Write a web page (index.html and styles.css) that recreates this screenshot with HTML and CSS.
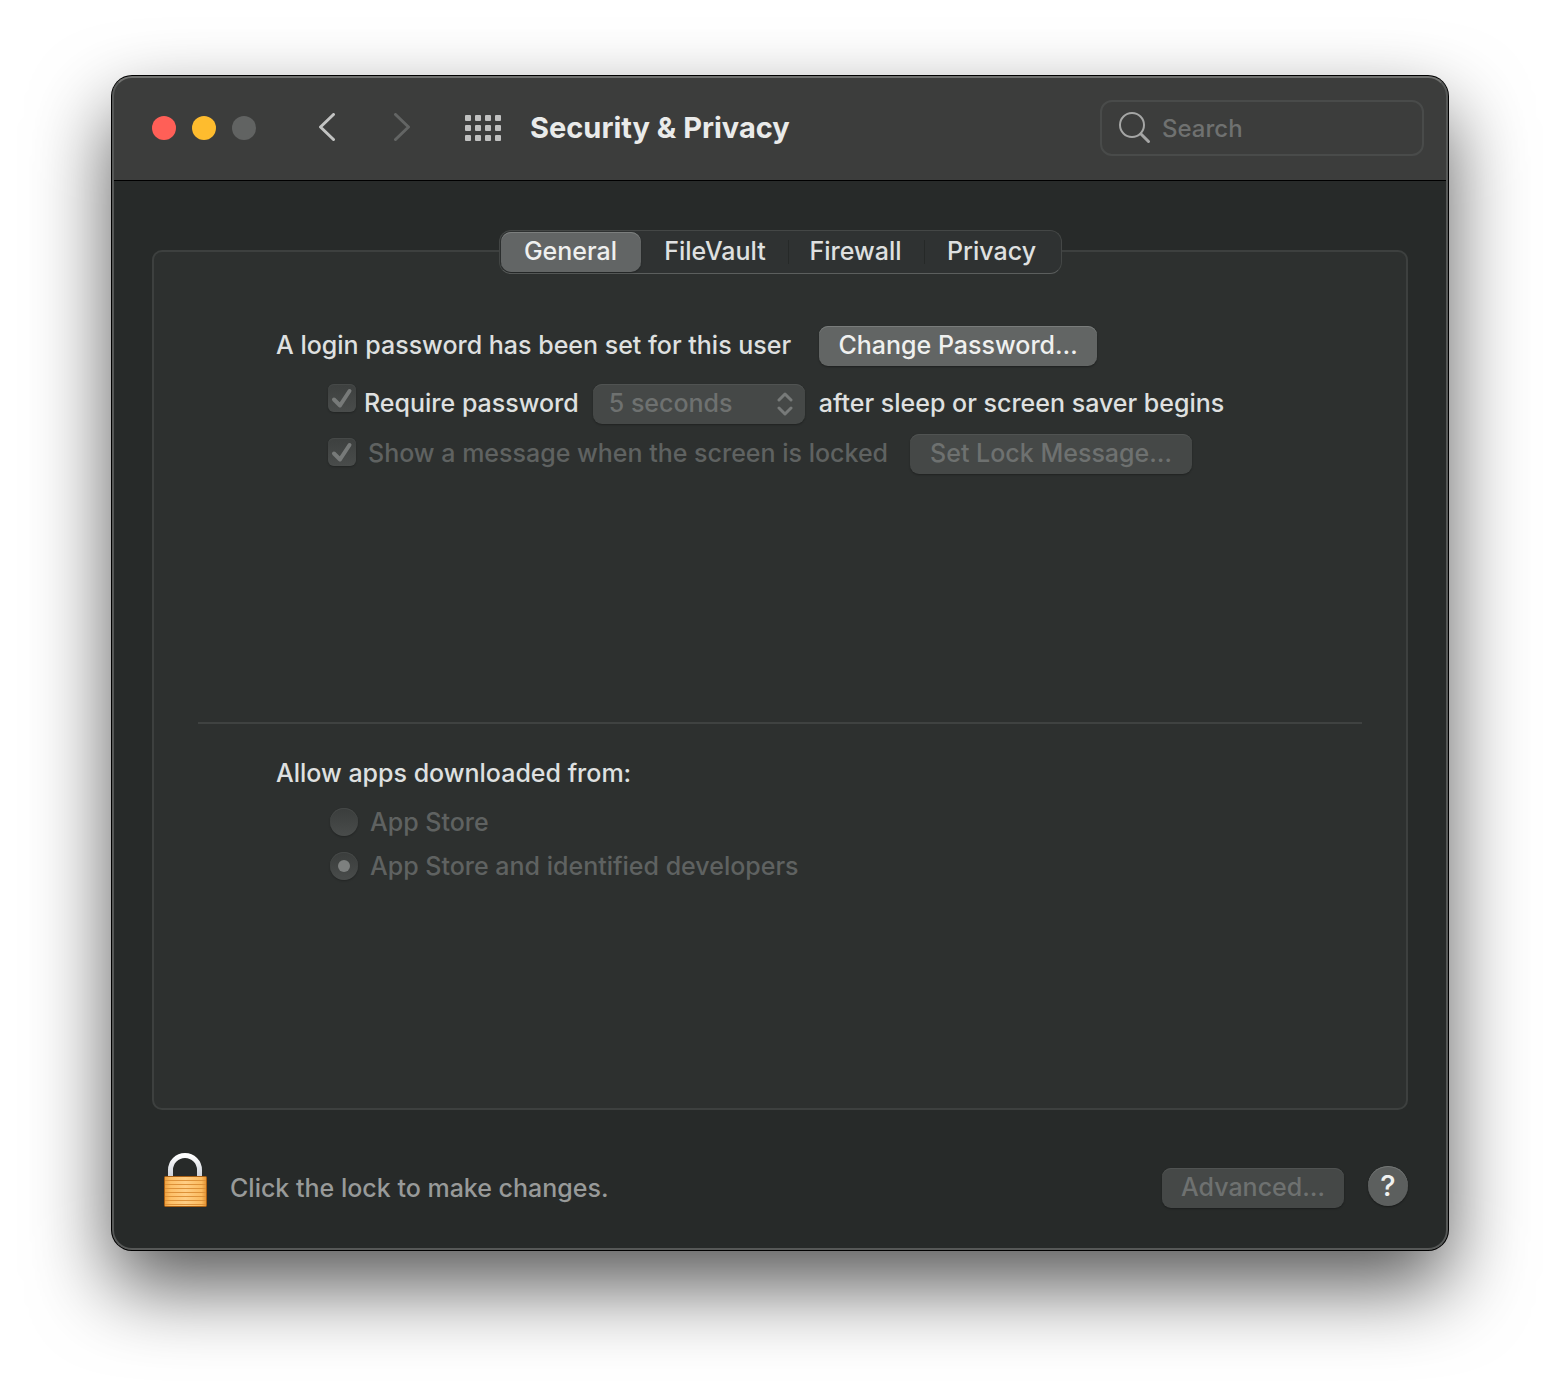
FILE: index.html
```html
<!DOCTYPE html>
<html lang="en">
<head>
    <meta charset="UTF-8">
    <meta name="viewport" content="width=device-width, initial-scale=1.0">
    <title>Security &amp; Privacy</title>
    <link rel="stylesheet" href="styles.css">
</head>
<body>

    <div class="window">
        <header class="titlebar">
            <div class="lights">
                <button type="button" class="light close" aria-label="Close"></button>
                <button type="button" class="light minimize" aria-label="Minimize"></button>
                <button type="button" class="light zoom" aria-label="Zoom" disabled></button>
            </div>
            <div class="nav">
                <button type="button" class="icon-btn" aria-label="Back">
                    <svg width="18" height="30" viewBox="0 0 18 30"><path d="M15.500 1.500 2.500 14l13 12.500"/></svg>
                </button>
                <button type="button" class="icon-btn" aria-label="Forward" disabled>
                    <svg width="18" height="30" viewBox="0 0 18 30"><path d="M2.500 1.500l13 12.500-13 12.500"/></svg>
                </button>
            </div>
            <button type="button" class="icon-btn show-all" aria-label="Show All">
                <svg width="36" height="26" viewBox="0 0 36 26">
                    <g id="dots">
                        <rect width="6" height="6" rx="1"/>
                        <rect x="10" width="6" height="6" rx="1"/>
                        <rect x="20" width="6" height="6" rx="1"/>
                        <rect x="30" width="6" height="6" rx="1"/>
                    </g>
                    <use href="#dots" y="10"/>
                    <use href="#dots" y="20"/>
                </svg>
            </button>
            <h1>Security &amp; Privacy</h1>
            <label class="search">
                <svg width="34" height="34" viewBox="0 0 34 34"><circle cx="14" cy="14" r="12"/><path d="M23 23l7.500 7.500"/></svg>
                <input type="search" placeholder="Search" aria-label="Search">
            </label>
        </header>

        <main>
            <div class="tabs" role="tablist">
                <button type="button" role="tab" class="tab active" aria-selected="true">General</button>
                <button type="button" role="tab" class="tab">FileVault</button>
                <button type="button" role="tab" class="tab">Firewall</button>
                <button type="button" role="tab" class="tab">Privacy</button>
            </div>

            <div class="panel">
                <section class="login">
                    <div class="row">
                        <span>A login password has been set for this user</span>
                        <button type="button" class="btn change">Change Password…</button>
                    </div>
                    <div class="row indent require">
                        <span class="check">
                            <input type="checkbox" id="require" checked disabled>
                            <svg width="28" height="28" viewBox="0 0 28 28"><path d="M6 15.500l6 6L21.500 7"/></svg>
                        </span>
                        <label for="require">Require password</label>
                        <span class="select">
                            <select id="delay" aria-label="Delay" disabled>
                                <option>5 seconds</option>
                            </select>
                            <svg width="16" height="24" viewBox="0 0 16 24"><path d="M2 8l6-6 6 6M2 16l6 6 6-6"/></svg>
                        </span>
                        <label for="delay">after sleep or screen saver begins</label>
                    </div>
                    <div class="row indent message">
                        <span class="check">
                            <input type="checkbox" id="message" checked disabled>
                            <svg width="28" height="28" viewBox="0 0 28 28"><path d="M6 15.500l6 6L21.500 7"/></svg>
                        </span>
                        <label for="message" class="dim">Show a message when the screen is locked</label>
                        <button type="button" class="btn lock-message" disabled>Set Lock Message…</button>
                    </div>
                </section>

                <hr>

                <fieldset class="apps">
                    <legend>Allow apps downloaded from:</legend>
                    <label class="radio"><input type="radio" name="apps" disabled>App Store</label>
                    <label class="radio"><input type="radio" name="apps" checked disabled>App Store and identified developers</label>
                </fieldset>
            </div>

            <footer>
                <button type="button" class="icon-btn lock" aria-label="Unlock">
                    <svg width="44" height="56" viewBox="0 0 44 56">
                        <defs>
                            <linearGradient id="steel" x1="0" x2="0" y1="0" y2="1">
                                <stop offset="0" stop-color="#fff"/>
                                <stop offset="1" stop-color="#c9ced6"/>
                            </linearGradient>
                            <linearGradient id="brass" x1="0" x2="1" y1="0" y2="0">
                                <stop offset="0" stop-color="#ee9f3c"/>
                                <stop offset=".15" stop-color="#fdc068"/>
                                <stop offset=".5" stop-color="#ffce84"/>
                                <stop offset=".88" stop-color="#fbbb60"/>
                                <stop offset="1" stop-color="#e3912f"/>
                            </linearGradient>
                        </defs>
                        <path class="shackle" d="M7.500 26V18a14.500 14.500 0 0 1 29 0v8"/>
                        <rect class="body" x="1.500" y="24.500" width="42" height="30" rx="1"/>
                        <path class="grooves" d="M2 28.500h41M2 32.500h41M2 36.500h41M2 40.500h41M2 44.500h41M2 48.500h41M2 52.500h41"/>
                    </svg>
                </button>
                <span class="hint">Click the lock to make changes.</span>
                <button type="button" class="btn advanced" disabled>Advanced…</button>
                <button type="button" class="help" aria-label="Help">?</button>
            </footer>
        </main>
    </div>

</body>
</html>
```
FILE: styles.css
```css
* {
    box-sizing: border-box;
}

body {
    margin: 0;
    padding: 76px 112px 148px;
    background-color: #fff;
    font-family: Inter, 'Helvetica Neue', Arial, sans-serif;
    font-size: 25px;
    font-weight: 500;
    line-height: 40px;
    color: #dfe0e0;
}

button,
input,
select {
    margin: 0;
    font: inherit;
    color: inherit;
}

.window {
    position: relative;
    background-color: #272a29;
    border-radius: 20px;
    overflow: hidden;
    box-shadow: 0 0 0 1px #000, 0 36px 80px rgba(0, 0, 0, 0.66);
}

/* light rim drawn over the title bar and body */
.window::after {
    content: "";
    position: absolute;
    inset: 0;
    border: 2px solid #565857;
    border-top-color: #70716f;
    border-radius: 20px;
    pointer-events: none;
}

.titlebar {
    display: flex;
    align-items: center;
    height: 105px;
    padding: 0 24px 0 40px;
    background-color: #3c3d3c;
    border-bottom: 1px solid #000;
}

.lights {
    display: flex;
    gap: 16px;
}

.light {
    width: 24px;
    height: 24px;
    padding: 0;
    border: none;
    border-radius: 50%;
}

.close {
    background-color: #ff5f57;
}

.minimize {
    background-color: #febc2e;
}

.zoom {
    background-color: #616362;
}

.nav {
    display: flex;
    gap: 57px;
    margin-left: 62px;
}

.icon-btn {
    display: flex;
    padding: 0;
    background: none;
    border: none;
}

.nav path {
    fill: none;
    stroke: #c2c3c2;
    stroke-width: 3;
    stroke-linecap: round;
    stroke-linejoin: round;
}

.nav [disabled] path {
    stroke: #636564;
}

.show-all {
    margin-left: 54px;
    fill: #c0c1c0;
}

h1 {
    margin: 0 auto 0 29px;
    font-size: 29px;
    font-weight: 700;
    color: #eaebea;
}

.search {
    display: flex;
    align-items: center;
    gap: 10px;
    width: 324px;
    height: 56px;
    padding: 0 16px;
    border: 2px solid #494b4a;
    border-radius: 12px;
}

.search svg {
    flex: none;
    fill: none;
    stroke: #a5a6a5;
    stroke-width: 2;
}

.search path {
    stroke-width: 3;
    stroke-linecap: round;
}

.search input {
    width: 100%;
    padding: 2px 0 0;
    font-size: 24px;
    background: none;
    border: none;
    outline: none;
}

.search input::placeholder {
    color: #6f7170;
}

main {
    padding: 49px 40px 42px;
}

.tabs {
    position: relative;
    display: flex;
    width: fit-content;
    height: 44px;
    margin: 0 auto -24px;
    padding: 1px;
    background-color: #2f3232;
    border: 1px solid #444746;
    border-bottom-color: #5c5f5e;
    border-radius: 12px;
}

.tab {
    position: relative;
    width: 136px;
    padding: 0 0 2px;
    line-height: 38px;
    background: none;
    border: none;
}

.tab:nth-child(2) {
    width: 145px;
}

.tab + .tab + .tab::before {
    content: "";
    position: absolute;
    left: 0;
    top: 8px;
    width: 1px;
    height: 24px;
    background-color: #262928;
}

.tab.active {
    width: 140px;
    margin-right: 2px;
    background-color: #626565;
    border-radius: 10px;
    box-shadow: inset 0 1px #7c7f7e, 0 1px 2px rgba(0, 0, 0, 0.3);
    color: #eff0ef;
}

.panel {
    min-height: 860px;
    padding: 74px 44px;
    background-color: #2d302f;
    border: 2px solid #3d403f;
    border-radius: 10px;
}

.login {
    min-height: 396px;
    padding-left: 78px;
}

.row {
    display: flex;
    align-items: flex-start;
    height: 40px;
    line-height: 38px;
    white-space: nowrap;
}

.indent {
    padding-left: 52px;
}

.require {
    margin-top: 18px;
}

.message {
    margin-top: 10px;
}

.btn {
    height: 40px;
    padding: 0 0 2px;
    line-height: 38px;
    background-color: #626564;
    border: none;
    border-radius: 9px;
    box-shadow: inset 0 1px #797c7b, 0 1px 2px rgba(0, 0, 0, 0.35);
    color: #eff0ef;
}

.btn:disabled {
    background-color: #454847;
    box-shadow: inset 0 1px #505352, 0 1px 2px rgba(0, 0, 0, 0.3);
    color: #6e7170;
}

.change {
    width: 278px;
    margin-left: 28px;
}

.lock-message {
    width: 282px;
    margin-left: 22px;
}

.check,
.select {
    display: grid;
    align-items: center;
}

.check > *,
.select > * {
    grid-area: 1 / 1;
}

.check {
    margin-right: 8px;
}

.message .check {
    margin: 4px 12px 0 0;
}

.check input {
    appearance: none;
    width: 28px;
    height: 28px;
    background: linear-gradient(#3d403f, #494c4b);
    border-radius: 6px;
    box-shadow: inset 0 1px #464948, 0 1px 2px rgba(0, 0, 0, 0.25);
}

.check svg,
.select svg {
    position: relative;
    fill: none;
    stroke: #777a79;
    stroke-linecap: round;
    stroke-linejoin: round;
    pointer-events: none;
}

.check svg {
    stroke-width: 4;
}

.select {
    margin: 0 14px;
}

.select select {
    appearance: none;
    width: 212px;
    height: 40px;
    padding: 0 16px 2px;
    line-height: 38px;
    background-color: #454847;
    border: none;
    border-radius: 9px;
    box-shadow: inset 0 1px #505352, 0 1px 2px rgba(0, 0, 0, 0.3);
    color: #6e7170;
    opacity: 1;
}

.select svg {
    justify-self: end;
    margin-right: 12px;
    stroke-width: 3;
}

.dim,
.radio {
    color: #5f6261;
}

hr {
    height: 2px;
    margin: 0;
    background-color: #3f4241;
    border: none;
}

.apps {
    margin: 0;
    padding: 9px 0 0 132px;
    border: none;
}

.apps legend {
    margin-left: -54px;
    padding: 29px 0 0;
}

.radio {
    display: flex;
    align-items: center;
    gap: 12px;
    width: fit-content;
    height: 40px;
}

.radio + .radio {
    margin-top: 4px;
}

.radio input {
    appearance: none;
    display: grid;
    place-items: center;
    width: 28px;
    height: 28px;
    background: linear-gradient(#3a3d3c, #494c4b);
    border-radius: 50%;
    box-shadow: inset 0 1px #464948, 0 1px 2px rgba(0, 0, 0, 0.25);
}

.radio input:checked::before {
    content: "";
    width: 12px;
    height: 12px;
    background-color: #7d807f;
    border-radius: 50%;
}

footer {
    display: flex;
    align-items: flex-end;
    padding: 42px 0 0 11px;
}

.shackle {
    fill: none;
    stroke: url(#steel);
    stroke-width: 5;
}

.body {
    fill: url(#brass);
    stroke: #a85f14;
}

.grooves {
    stroke: #dd9138;
    stroke-width: 1;
}

.hint {
    margin: 0 auto 0 23px;
    color: #989a99;
}

.advanced {
    width: 182px;
    margin-right: 24px;
}

.help {
    width: 40px;
    height: 40px;
    margin-bottom: 2px;
    padding: 0;
    font-size: 29px;
    line-height: 40px;
    background-color: #5c5f5e;
    border: none;
    border-radius: 50%;
    box-shadow: inset 0 1px #737675, 0 1px 2px rgba(0, 0, 0, 0.4);
    color: #f0f1f0;
}
```
